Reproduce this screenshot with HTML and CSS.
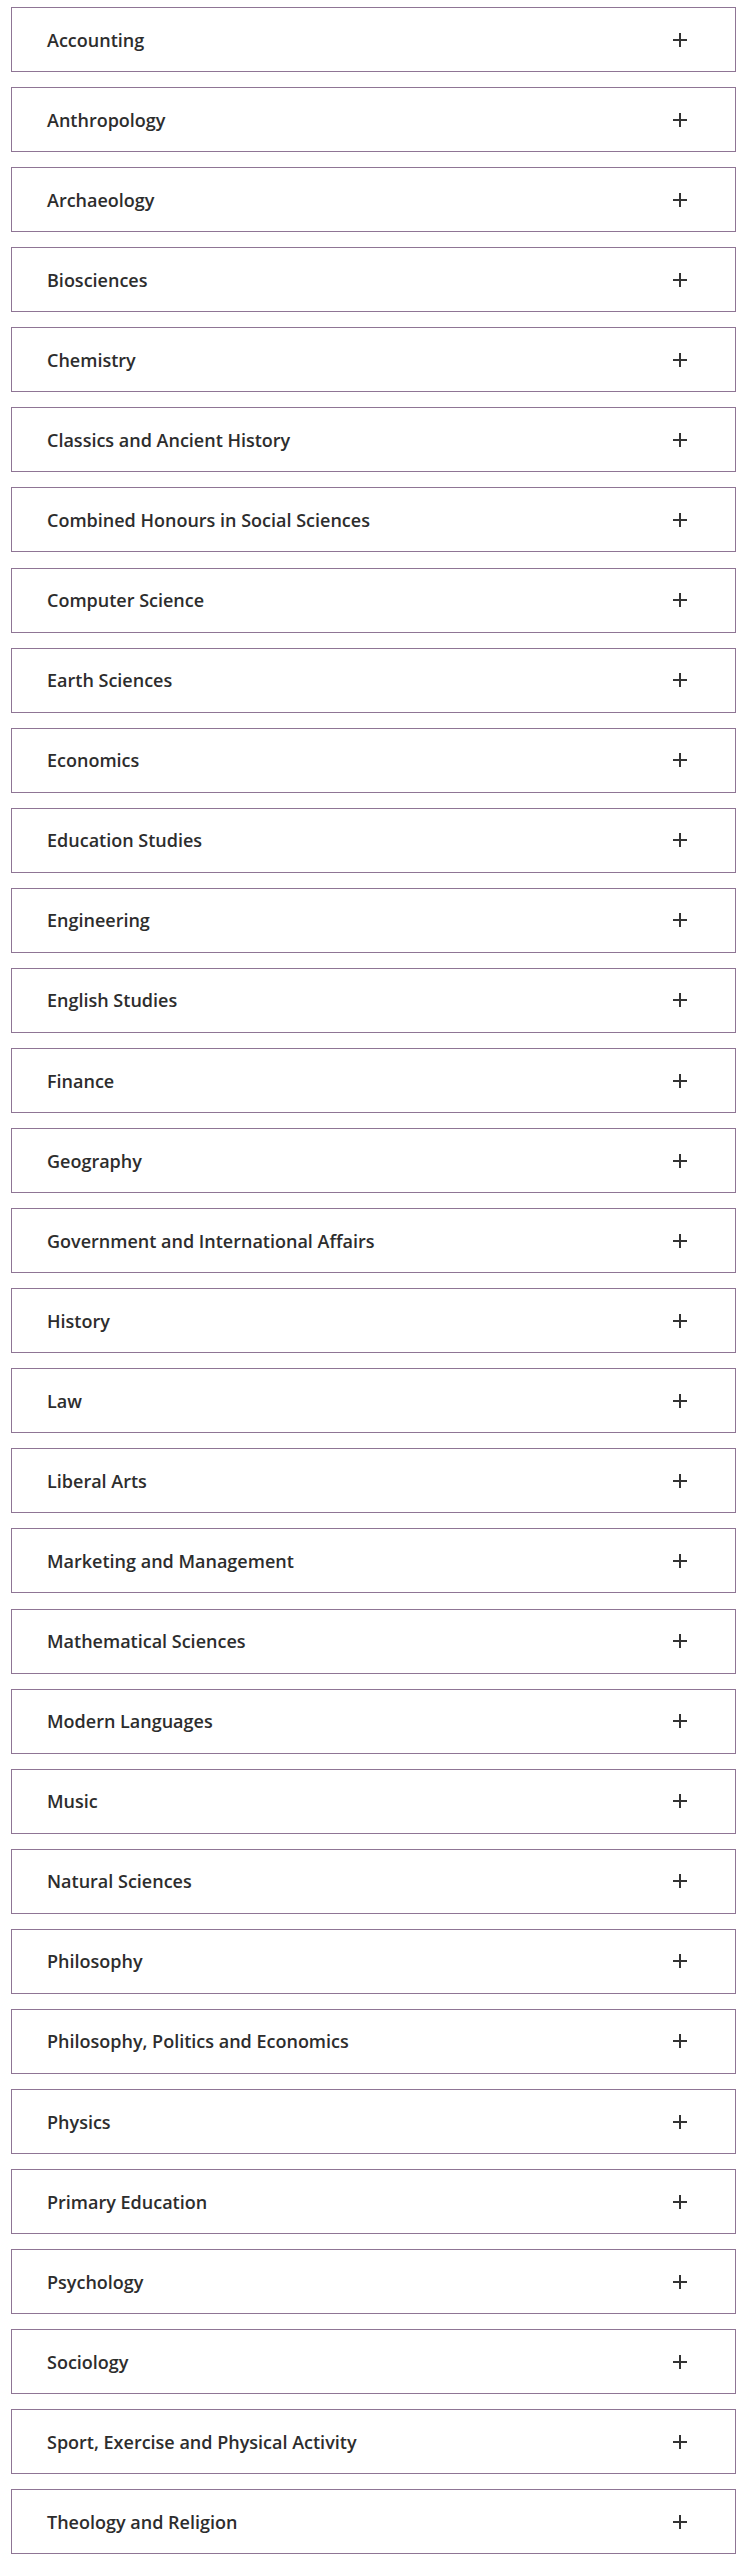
FILE: index.html
```html
<!DOCTYPE html>
<html lang="en">
<head>
  <meta charset="UTF-8">
  <meta name="viewport" content="width=device-width, initial-scale=1.0">
  <title>Subjects</title>
  <link rel="stylesheet" href="styles.css">
</head>
<body>
  <div class="subject-list">
    <button class="subject"><span>Accounting</span><i class="plus"></i></button>
    <button class="subject"><span>Anthropology</span><i class="plus"></i></button>
    <button class="subject"><span>Archaeology</span><i class="plus"></i></button>
    <button class="subject"><span>Biosciences</span><i class="plus"></i></button>
    <button class="subject"><span>Chemistry</span><i class="plus"></i></button>
    <button class="subject"><span>Classics and Ancient History</span><i class="plus"></i></button>
    <button class="subject"><span>Combined Honours in Social Sciences</span><i class="plus"></i></button>
    <button class="subject"><span>Computer Science</span><i class="plus"></i></button>
    <button class="subject"><span>Earth Sciences</span><i class="plus"></i></button>
    <button class="subject"><span>Economics</span><i class="plus"></i></button>
    <button class="subject"><span>Education Studies</span><i class="plus"></i></button>
    <button class="subject"><span>Engineering</span><i class="plus"></i></button>
    <button class="subject"><span>English Studies</span><i class="plus"></i></button>
    <button class="subject"><span>Finance</span><i class="plus"></i></button>
    <button class="subject"><span>Geography</span><i class="plus"></i></button>
    <button class="subject"><span>Government and International Affairs</span><i class="plus"></i></button>
    <button class="subject"><span>History</span><i class="plus"></i></button>
    <button class="subject"><span>Law</span><i class="plus"></i></button>
    <button class="subject"><span>Liberal Arts</span><i class="plus"></i></button>
    <button class="subject"><span>Marketing and Management</span><i class="plus"></i></button>
    <button class="subject"><span>Mathematical Sciences</span><i class="plus"></i></button>
    <button class="subject"><span>Modern Languages</span><i class="plus"></i></button>
    <button class="subject"><span>Music</span><i class="plus"></i></button>
    <button class="subject"><span>Natural Sciences</span><i class="plus"></i></button>
    <button class="subject"><span>Philosophy</span><i class="plus"></i></button>
    <button class="subject"><span>Philosophy, Politics and Economics</span><i class="plus"></i></button>
    <button class="subject"><span>Physics</span><i class="plus"></i></button>
    <button class="subject"><span>Primary Education</span><i class="plus"></i></button>
    <button class="subject"><span>Psychology</span><i class="plus"></i></button>
    <button class="subject"><span>Sociology</span><i class="plus"></i></button>
    <button class="subject"><span>Sport, Exercise and Physical Activity</span><i class="plus"></i></button>
    <button class="subject"><span>Theology and Religion</span><i class="plus"></i></button>
  </div>
</body>
</html>
```

FILE: styles.css
```css
body {
  margin: 0;
  background: #fff;
  font-family: 'Open Sans', 'Noto Sans', sans-serif;
  color: #2d2d2d;
}
.subject-list {
  display: flex;
  flex-direction: column;
  gap: 15.08px;
  padding: 7px 9px 0 11px;
}
.subject {
  display: flex;
  align-items: center;
  justify-content: space-between;
  height: 65px;
  padding: 0 48px 0 35px;
  background: #fff;
  border: 1px solid #8f7595;
  font-family: inherit;
  font-size: 18px;
  font-weight: 600;
  color: #2d2d2d;
  text-align: left;
  cursor: pointer;
}
.plus {
  position: relative;
  width: 14px;
  height: 14px;
}
.plus::before,
.plus::after {
  content: "";
  position: absolute;
  background: #333;
}
.plus::before {
  left: 0;
  top: 6px;
  width: 14px;
  height: 2px;
}
.plus::after {
  left: 6px;
  top: 0;
  width: 2px;
  height: 14px;
}
```
